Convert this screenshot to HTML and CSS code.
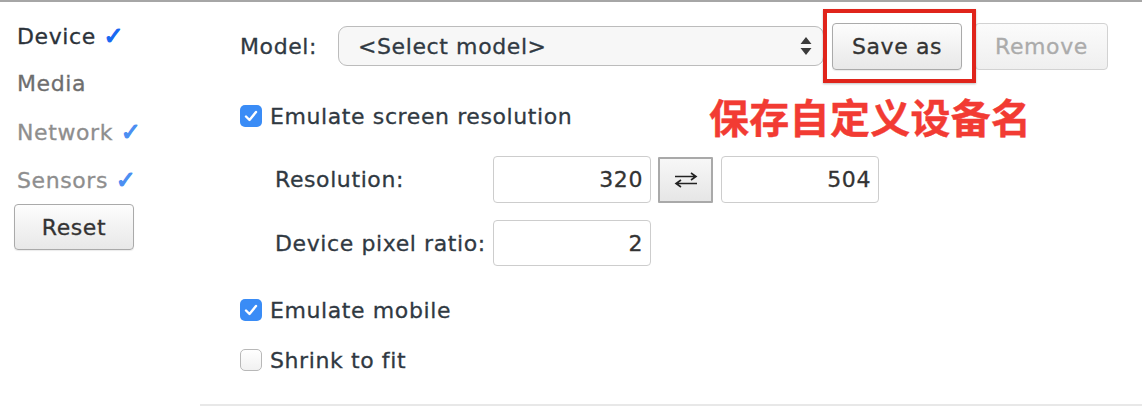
FILE: index.html
```html
<!DOCTYPE html>
<html>
<head>
<meta charset="utf-8">
<link rel="stylesheet" href="styles.css">
</head>
<body>
<div class="app">
  <aside class="sidebar">
    <div class="tab tab-active">Device <span class="chk">✓</span></div>
    <div class="tab tab-media">Media</div>
    <div class="tab tab-dim">Network <span class="chk chk-light">✓</span></div>
    <div class="tab tab-dim">Sensors <span class="chk chk-light">✓</span></div>
    <button class="btn reset">Reset</button>
  </aside>
  <main class="panel">
    <div class="row model-row">
      <span class="model-label">Model:</span>
      <div class="select">
        <span class="select-text">&lt;Select model&gt;</span>
        <svg class="select-arrows" width="12" height="20" viewBox="0 0 12 20"><path d="M6 1 L11.5 8 L0.5 8 Z M0.5 12 L11.5 12 L6 19 Z" fill="#3c3c3c"/></svg>
      </div>
      <div class="save-wrap">
        <button class="btn save">Save as</button>
        <div class="highlight"></div>
      </div>
      <button class="btn remove">Remove</button>
    </div>
    <div class="annotation">保存自定义设备名</div>

    <div class="row check-row first-check">
      <span class="cb cb-on"><svg width="14" height="12" viewBox="0 0 14 12"><path d="M2 6.5 L5.5 10 L12 2" fill="none" stroke="#fff" stroke-width="2.4" stroke-linecap="round" stroke-linejoin="round"/></svg></span>
      <span class="cb-label">Emulate screen resolution</span>
    </div>

    <div class="row field-row res-row">
      <span class="field-label">Resolution:</span>
      <div class="input">320</div>
      <button class="swap"><svg width="24" height="16" viewBox="0 0 24 16"><path d="M1 4.5 H22 M17 1 L22 4.5 L17 8" fill="none" stroke="#222" stroke-width="1.6" stroke-linejoin="miter"/><path d="M23 11.5 H2 M7 8 L2 11.5 L7 15" fill="none" stroke="#222" stroke-width="1.6"/></svg></button>
      <div class="input">504</div>
    </div>

    <div class="row field-row dpr-row">
      <span class="field-label">Device pixel ratio:</span>
      <div class="input">2</div>
    </div>

    <div class="row check-row mobile-row">
      <span class="cb cb-on"><svg width="14" height="12" viewBox="0 0 14 12"><path d="M2 6.5 L5.5 10 L12 2" fill="none" stroke="#fff" stroke-width="2.4" stroke-linecap="round" stroke-linejoin="round"/></svg></span>
      <span class="cb-label">Emulate mobile</span>
    </div>

    <div class="row check-row shrink-row">
      <span class="cb cb-off"></span>
      <span class="cb-label">Shrink to fit</span>
    </div>
  </main>
</div>
</body>
</html>
```

FILE: styles.css
```css
* { box-sizing: border-box; }
html, body { margin: 0; padding: 0; background: #fff; }
body {
  font-family: "DejaVu Sans", "Noto Sans CJK SC", sans-serif;
  font-size: 22px;
  letter-spacing: 0.6px;
  -webkit-text-stroke: 0.3px currentColor;
  color: #303942;
  width: 1142px;
  height: 420px;
  overflow: hidden;
}
.app {
  display: flex;
  border-top: 2px solid #a6a6a6;
}
.sidebar {
  width: 200px;
  flex: none;
  padding: 10px 0 0 17px;
  display: flex;
  flex-direction: column;
  align-items: flex-start;
}
.tab {
  height: 48px;
  line-height: 48px;
  white-space: nowrap;
}
.tab-active { color: #2b323a; }
.tab-media { color: #6e6e6e; }
.tab-dim { color: #8e8e8e; }
.chk {
  color: #1768f2;
  font-size: 24px;
  -webkit-text-stroke: 1.2px currentColor;
}
.chk-light { color: #4b8ef2; }

.btn {
  font-family: inherit;
  font-size: 22px;
  letter-spacing: 0.6px;
  -webkit-text-stroke: 0.3px currentColor;
  color: #333;
  background: linear-gradient(#fdfdfd, #e8e8e8);
  border: 1.5px solid #aaaaaa;
  border-radius: 4px;
  padding: 0;
  box-shadow: 0 1px 1px rgba(0,0,0,0.08);
}
.reset {
  margin-left: -3px;
  width: 120px;
  height: 46px;
}

.panel {
  flex: 1;
  position: relative;
  padding: 21px 0 29px 40px;
  border-bottom: 2px solid #e8e8e8;
  display: flex;
  flex-direction: column;
}
.row {
  display: flex;
  align-items: center;
}
.model-row { height: 47px; }
.model-label { width: 98px; flex: none; }
.select {
  width: 486px;
  height: 40px;
  border: 1.5px solid #bcbcbc;
  border-radius: 9px;
  background: #f7f7f7;
  display: flex;
  align-items: center;
  justify-content: space-between;
  padding: 0 11px 0 19px;
  margin-bottom: 1px;
}
.select-arrows { display: block; }
.save-wrap {
  position: relative;
  margin-left: 8px;
}
.save {
  display: block;
  width: 130px;
  height: 47px;
}
.highlight {
  position: absolute;
  left: -9px;
  top: -14px;
  width: 153px;
  height: 74px;
  border: 4px solid #e0241b;
  box-shadow: 0 1px 2px rgba(0,0,0,0.25);
  pointer-events: none;
}
.remove {
  margin-left: 13px;
  width: 133px;
  height: 47px;
  color: #ababab;
  border-color: #d2d2d2;
  background: linear-gradient(#fbfbfb, #efefef);
  box-shadow: none;
}
.annotation {
  position: absolute;
  left: 509px;
  top: 90px;
  font-family: "Noto Sans CJK SC", sans-serif;
  font-weight: 700;
  font-size: 40px;
  line-height: 48px;
  letter-spacing: 0.3px;
  -webkit-text-stroke: 0.4px currentColor;
  color: #f23b33;
  white-space: nowrap;
}

.check-row { height: 30px; }
.first-check { margin-top: 31px; }
.mobile-row { margin-top: 29px; }
.shrink-row { margin-top: 20px; }
.cb {
  width: 22px;
  height: 22px;
  border-radius: 5px;
  flex: none;
  display: flex;
  align-items: center;
  justify-content: center;
}
.cb-on { background: #3a8cf6; }
.cb-off {
  border: 1.5px solid #b8b8b8;
  background: linear-gradient(#ffffff, #f1f1f1);
}
.cb-label { margin-left: 8px; }

.field-row {
  height: 47px;
  padding-left: 35px;
}
.res-row { margin-top: 25px; }
.dpr-row { margin-top: 17px; height: 46px; }
.field-label { width: 218px; flex: none; }
.input {
  width: 158px;
  height: 100%;
  border: 1.5px solid #cdcdcd;
  border-radius: 4px;
  display: flex;
  align-items: center;
  justify-content: flex-end;
  padding-right: 7px;
  color: #333;
}
.swap {
  width: 55px;
  height: 46px;
  margin: 0 8px 0 7px;
  border: 2px solid #a9a9a9;
  border-radius: 1px;
  background: linear-gradient(#f7f7f7, #e6e6e6);
  padding: 0;
  display: flex;
  align-items: center;
  justify-content: center;
}
.swap svg { display: block; }
```
